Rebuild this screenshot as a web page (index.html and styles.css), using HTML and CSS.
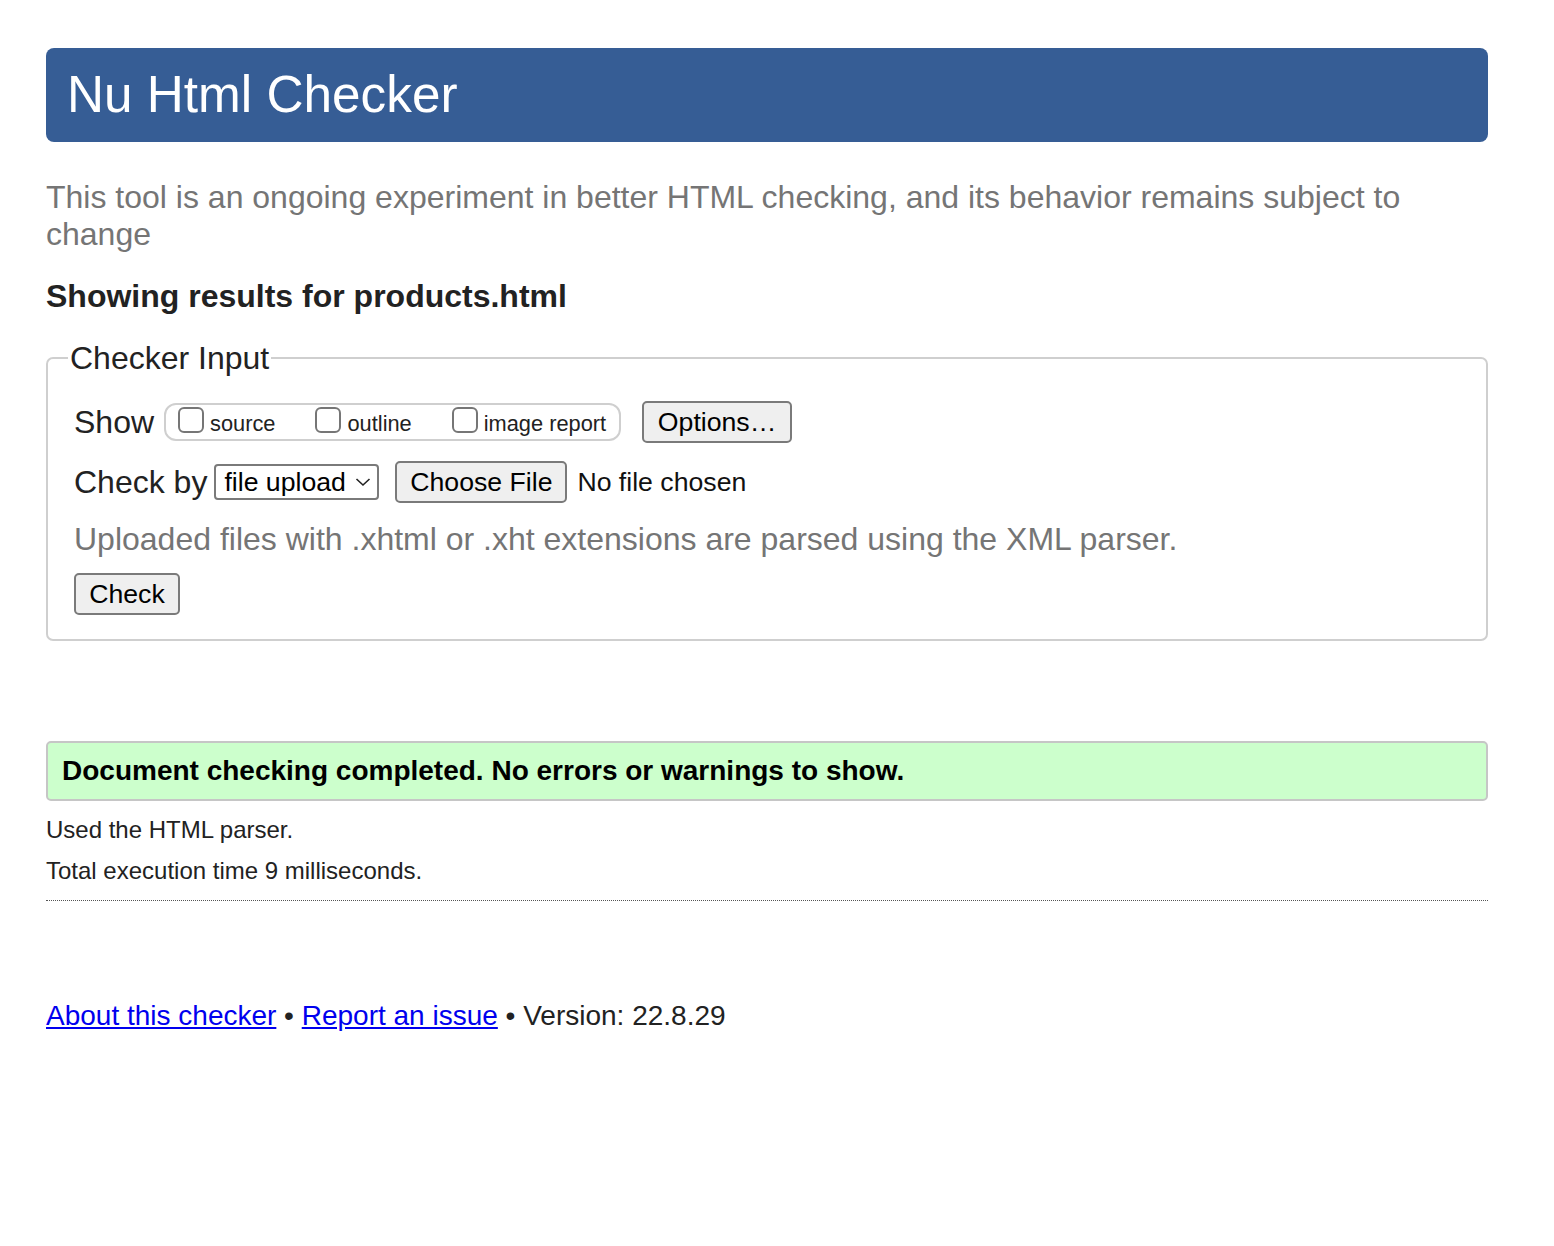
FILE: index.html
```html
<!DOCTYPE html>
<html lang="en">
<head>
<meta charset="utf-8">
<title>Showing results for products.html - Nu Html Checker</title>
<link rel="stylesheet" href="styles.css">
</head>
<body>
<h1 class="title">Nu Html Checker</h1>
<p class="intro">This tool is an ongoing experiment in better HTML checking, and its behavior remains subject to change</p>
<h2 class="results-for">Showing results for products.html</h2>
<form class="form">
  <fieldset class="input-set">
    <legend class="legend">Checker Input</legend>
    <div class="row row-show">
      <span class="label">Show</span>
      <span class="pill">
        <label class="opt"><input type="checkbox" class="cb"><span>source</span></label>
        <label class="opt"><input type="checkbox" class="cb"><span>outline</span></label>
        <label class="opt"><input type="checkbox" class="cb"><span>image report</span></label>
      </span>
      <button type="button" class="btn btn-options">Options…</button>
    </div>
    <div class="row row-check">
      <span class="label">Check by</span>
      <span class="select-wrap">
        <select class="select"><option>file upload</option></select>
        <svg class="chev" width="16" height="10" viewBox="0 0 16 10"><path d="M1.5 2 L8 8 L14.5 2" fill="none" stroke="#222" stroke-width="1.6"/></svg>
      </span>
      <button type="button" class="btn btn-file">Choose File</button>
      <span class="nofile">No file chosen</span>
    </div>
    <p class="hint">Uploaded files with .xhtml or .xht extensions are parsed using the XML parser.</p>
    <div class="row row-submit">
      <button type="button" class="btn btn-check">Check</button>
    </div>
  </fieldset>
</form>
<div class="success">Document checking completed. No errors or warnings to show.</div>
<p class="details">Used the HTML parser.</p>
<p class="details details-second">Total execution time 9 milliseconds.</p>
<div class="rule"></div>
<p class="footer"><a href="#" class="link">About this checker</a> • <a href="#" class="link">Report an issue</a> • Version: 22.8.29</p>
</body>
</html>
```
FILE: styles.css
```css
html, body {
  background: #fff;
}
body {
  margin: 0;
  padding: 48px 66px 60px 46px;
  font-family: "Liberation Sans", Arial, Helvetica, sans-serif;
  color: #222;
}
.title {
  margin: 0;
  height: 94px;
  line-height: 94px;
  padding: 0 21px;
  background: #365d95;
  color: #fff;
  font-size: 51.3px;
  font-weight: normal;
  border-radius: 8px;
}
.intro {
  margin: 37px 0 0;
  font-size: 32px;
  line-height: 37px;
  color: #757575;
}
.results-for {
  margin: 27px 0 0;
  font-size: 32px;
  line-height: 32px;
  font-weight: bold;
  color: #222;
}
.form {
  margin: 30px 0 0;
}
.input-set {
  margin: 0;
  padding: 27px 20px 24px;
  border: 2px solid #cfcfcf;
  border-radius: 7px;
  min-width: 0;
}
.legend {
  padding: 0 2px;
  font-size: 32px;
  line-height: 32px;
  color: #222;
}
.row {
  display: flex;
  align-items: center;
  height: 42px;
  padding-left: 6px;
}
.row-check {
  margin-top: 18px;
}
.label {
  font-size: 32px;
  color: #222;
}
.pill {
  display: inline-flex;
  align-items: center;
  height: 38px;
  box-sizing: border-box;
  margin-left: 10px;
  padding: 0 13px 0 12px;
  border: 2px solid #cfcfcf;
  border-radius: 12px;
  gap: 40px;
}
.opt {
  display: inline-flex;
  align-items: center;
  font-size: 21.8px;
  color: #222;
}
.cb {
  appearance: none;
  -webkit-appearance: none;
  width: 26px;
  height: 26px;
  box-sizing: border-box;
  margin: -4px 6px 0 0;
  border: 2px solid #767676;
  border-radius: 6px;
  background: #fff;
}
.opt span {
  padding-top: 4px;
}
.btn {
  font-family: "Liberation Sans", Arial, Helvetica, sans-serif;
  font-size: 26.67px;
  color: #000;
  background: #efefef;
  border: 2px solid #7a7a7a;
  border-radius: 5px;
  height: 42px;
  padding: 0 8px;
  margin: 0;
  white-space: nowrap;
}
.btn-options {
  margin-left: 21px;
  width: 150px;
}
.select-wrap {
  position: relative;
  display: inline-flex;
  margin-left: 7px;
}
.select {
  appearance: none;
  -webkit-appearance: none;
  font-family: "Liberation Sans", Arial, Helvetica, sans-serif;
  font-size: 26.67px;
  color: #000;
  background: #fff;
  border: 2px solid #7a7a7a;
  border-radius: 4px;
  height: 36px;
  width: 165px;
  padding: 0 0 0 8px;
  margin: 0;
}
.chev {
  position: absolute;
  right: 8px;
  top: 13px;
}
.btn-file {
  margin-left: 16px;
  width: 172px;
}
.nofile {
  margin-left: 10px;
  font-size: 26.67px;
  color: #111;
}
.hint {
  margin: 18px 0 0;
  padding-left: 6px;
  font-size: 32px;
  line-height: 37px;
  color: #757575;
}
.row-submit {
  margin-top: 15px;
  padding-left: 6px;
}
.btn-check {
  width: 106px;
}
.success {
  margin-top: 100px;
  height: 60px;
  box-sizing: border-box;
  display: flex;
  align-items: center;
  padding: 0 14px;
  background: #ccffcc;
  border: 2px solid #c6c6c6;
  border-radius: 5px;
  font-size: 28px;
  font-weight: bold;
  color: #000;
}
.details {
  margin: 15px 0 0;
  font-size: 24px;
  line-height: 28px;
  color: #222;
}
.details-second {
  margin-top: 13px;
}
.rule {
  margin-top: 15px;
  border-top: 1px dotted #555;
}
.footer {
  margin: 99px 0 0;
  font-size: 28px;
  line-height: 32px;
  color: #222;
}
.link {
  color: #0000ee;
  text-decoration: underline;
}
```
